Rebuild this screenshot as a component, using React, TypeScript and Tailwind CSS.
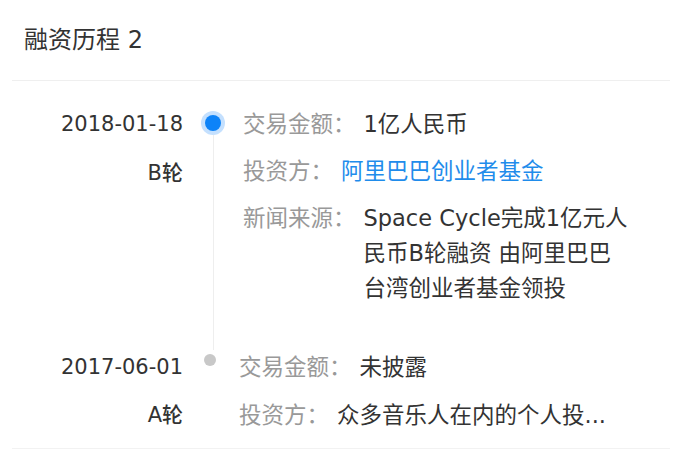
import React from 'react';

const FONT = { fontFamily: '"DejaVu Sans", "Noto Sans CJK SC", sans-serif' };

function Row({ label, children }: { label: string; children: React.ReactNode }) {
  return (
    <div className="flex gap-[8px] leading-[35px]">
      <span className="text-[#999999] whitespace-nowrap">{label}</span>
      <div className="text-[#333333] whitespace-nowrap">{children}</div>
    </div>
  );
}

export default function App() {
  return (
    <div className="w-[675px] h-[471px] bg-white overflow-hidden" style={FONT}>
      <div className="pl-6 pt-[23px] pb-[23px] text-[24px] leading-[34px] text-[#333333]">融资历程 2</div>
      <div className="ml-3 mr-[5px] h-px bg-[#efefef]" />

      <div className="pt-[26px]">
        {/* 2018 B round */}
        <div className="flex">
          <div className="w-[183px] text-right text-[21px] text-[#333333] leading-[35px]">
            <div>2018-01-18</div>
            <div className="mt-[14px] font-medium">B轮</div>
          </div>
          <div className="w-[60px] flex flex-col items-center">
            <div className="mt-[4px] w-6 h-6 rounded-full bg-[#c4e0fe] flex items-center justify-center">
              <div className="w-4 h-4 rounded-full bg-[#0d83f8]" />
            </div>
            <div className="flex-1 w-px bg-[#eeeeee]" />
          </div>
          <div className="text-[22.5px] flex flex-col gap-[12px] pb-[44px]">
            <Row label="交易金额：">1亿人民币</Row>
            <Row label="投资方：">
              <span className="text-[#1f8ceb]">阿里巴巴创业者基金</span>
            </Row>
            <Row label="新闻来源：">
              <span className="block">Space Cycle完成1亿元人</span>
              <span className="block">民币B轮融资 由阿里巴巴</span>
              <span className="block">台湾创业者基金领投</span>
            </Row>
          </div>
        </div>

        {/* 2017 A round */}
        <div className="flex pb-[15px]">
          <div className="w-[183px] text-right text-[21px] text-[#333333] leading-[35px]">
            <div>2017-06-01</div>
            <div className="mt-[13px] font-medium">A轮</div>
          </div>
          <div className="w-[56px] flex flex-col items-center pr-[2px]">
            <div className="mt-[4px] w-3 h-3 rounded-full bg-[#c8c8c8]" />
          </div>
          <div className="text-[22.5px] flex flex-col gap-[13px]">
            <Row label="交易金额：">未披露</Row>
            <Row label="投资方：">众多音乐人在内的个人投...</Row>
          </div>
        </div>
      </div>
      <div className="ml-3 mr-[5px] h-px bg-[#f2f2f2]" />
    </div>
  );
}
